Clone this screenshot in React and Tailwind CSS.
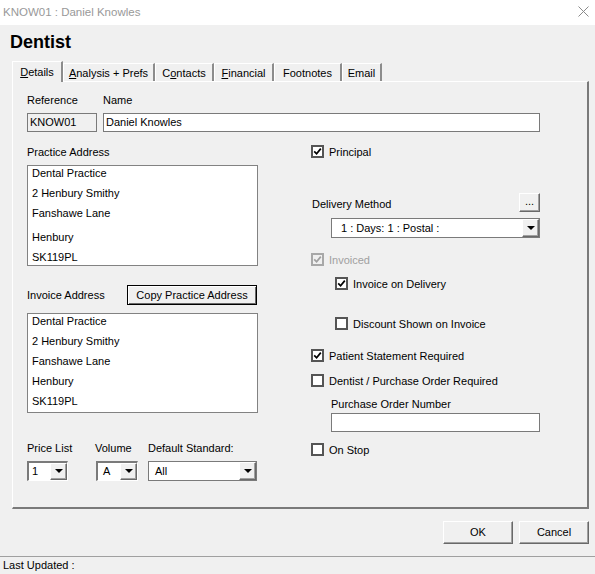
import React from "react";

const raised =
  "bg-[#f0f0f0] border-t border-l border-t-white border-l-white border-r border-b border-r-[#696969] border-b-[#696969] shadow-[inset_-1px_-1px_0_#a0a0a0]";

const Check = ({ checked, disabled, label, className = "" }) => (
  <div className={`flex items-center h-[16px] ${className}`}>
    <span
      className={`w-[13px] h-[13px] border-2 flex items-center justify-center ${
        disabled ? "border-[#a8a8a8] bg-[#f0f0f0]" : "border-[#555555] bg-white"
      }`}
    >
      {checked && (
        <svg width="9" height="9" viewBox="0 0 9 9">
          <path
            d="M1.2 4.3 L3.6 6.8 L7.8 1.6"
            fill="none"
            stroke={disabled ? "#a0a0a0" : "#000"}
            strokeWidth="1.7"
          />
        </svg>
      )}
    </span>
    <span className={`ml-[5px] ${disabled ? "text-[#a0a0a0]" : "text-black"}`}>{label}</span>
  </div>
);

const Arrow = () => (
  <span className={`w-[17px] h-full flex items-center justify-center ${raised}`}>
    <span className="w-0 h-0 border-l-[4px] border-r-[4px] border-t-[4px] border-l-transparent border-r-transparent border-t-black" />
  </span>
);

// sunken = small combos (dark top/left, light bottom/right)
const Combo = ({ value, width, sunken, textPad = "pl-[6px]" }) => (
  <div
    className={`flex h-[20px] bg-white ${
      sunken
        ? "border-t-2 border-l-2 border-t-[#7a7a7a] border-l-[#7a7a7a] border-b border-r border-b-white border-r-white"
        : "border border-[#7a7a7a]"
    }`}
    style={{ width }}
  >
    <span className={`flex-1 flex items-center ${textPad}`}>{value}</span>
    <Arrow />
  </div>
);

const AddressBox = ({ lines, height, extraGap }) => (
  <div className="w-[231px] bg-white border border-[#828282] overflow-hidden" style={{ height }}>
    <div className="-mt-[3px] pl-[4px]">
      {lines.map((l, i) => (
        <div key={i} className={`h-[20px] leading-[20px] ${extraGap && i === 3 ? "mt-[4px]" : ""}`}>
          {l}
        </div>
      ))}
    </div>
  </div>
);

const tabs = [
  { label: <><u>D</u>etails</>, w: 51, active: true },
  { label: <><u>A</u>nalysis + Prefs</>, w: 92 },
  { label: <>C<u>o</u>ntacts</>, w: 59 },
  { label: <><u>F</u>inancial</>, w: 60 },
  { label: <>Footnotes</>, w: 68 },
  { label: <>Email</>, w: 40 },
];

const address = ["Dental Practice", "2 Henbury Smithy", "Fanshawe Lane", "Henbury", "SK119PL"];

export default function App() {
  return (
    <div className="w-[595px] h-[574px] flex flex-col bg-[#f0f0f0] text-[11px] text-black font-['Liberation_Sans',Arial,sans-serif] overflow-hidden">
      {/* title bar */}
      <div className="h-[25px] bg-white flex items-center justify-between pl-[3px] pr-[6px]">
        <span className="text-[11.5px] text-[#999999]">KNOW01 : Daniel Knowles</span>
        <svg width="11" height="11" viewBox="0 0 11 11" className="-mt-[1px]">
          <path d="M0.5 0.5 L10.5 10.5 M10.5 0.5 L0.5 10.5" stroke="#8a8a8a" strokeWidth="1" />
        </svg>
      </div>

      <div className="mt-[7px] ml-[10px] text-[18px] leading-[20px] font-bold">Dentist</div>

      {/* tabs */}
      <div className="mt-[9px] ml-[12px] h-[20px] flex items-end">
        {tabs.map((t, i) => (
          <div
            key={i}
            style={{ width: t.w }}
            className={`flex items-center justify-center border-t border-t-white border-r-2 border-r-[#8c8c8c] border-l border-l-white ${
              t.active ? "h-[21px] -mb-[1px] relative z-10 bg-[#f0f0f0]" : "h-[18px] pt-[1px]"
            }`}
          >
            {t.label}
          </div>
        ))}
      </div>

      {/* panel */}
      <div className="w-[577px] h-[428px] ml-[12px] border-t border-l border-t-white border-l-white border-r-2 border-b-2 border-r-[#7a7a7a] border-b-[#7a7a7a] pt-[10px] pl-[14px]">
        <div className="flex h-[16px] items-center">
          <span className="w-[76px]">Reference</span>
          <span>Name</span>
        </div>
        <div className="mt-[5px] flex gap-[6px]">
          <div className="w-[70px] h-[19px] border border-[#7a7a7a] bg-[#f0f0f0] flex items-center pl-[2px]">
            KNOW01
          </div>
          <div className="w-[437px] h-[19px] border border-[#7a7a7a] bg-white flex items-center pl-[2px]">
            Daniel Knowles
          </div>
        </div>

        <div className="mt-[12px] flex">
          {/* left column */}
          <div className="w-[231px] flex flex-col">
            <div className="h-[16px] leading-[16px]">Practice Address</div>
            <div className="mt-[5px]">
              <AddressBox lines={address} height={101} extraGap />
            </div>
            <div className="mt-[19px] h-[20px] flex items-center">
              <span className="w-[100px]">Invoice Address</span>
              <button className="w-[130px] h-[20px] bg-[#f0f0f0] border border-black shadow-[inset_1px_1px_0_#fff,inset_-1px_-1px_0_#696969] flex items-center justify-center">
                Copy Practice Address
              </button>
            </div>
            <div className="mt-[8px]">
              <AddressBox lines={address} height={100} />
            </div>
            <div className="mt-[27px] h-[16px] flex items-center">
              <span className="w-[68px]">Price List</span>
              <span className="w-[53px]">Volume</span>
              <span>Default Standard:</span>
            </div>
            <div className="mt-[5px] flex">
              <div className="w-[69px]">
                <Combo value="1" width={41} sunken textPad="pl-[3px]" />
              </div>
              <div className="w-[52px]">
                <Combo value="A" width={42} sunken textPad="pl-[5px]" />
              </div>
              <Combo value="All" width={109} />
            </div>
          </div>

          {/* right column */}
          <div className="ml-[53px] w-[229px] flex flex-col">
            <Check checked label="Principal" />
            <div className="mt-[33px] h-[19px] flex items-center justify-between">
              <span className="ml-[1px] mt-[3px]">Delivery Method</span>
              <button className={`w-[21px] h-[19px] flex items-end justify-center pb-[4px] leading-none ${raised}`}>
                ...
              </button>
            </div>
            <div className="mt-[6px] ml-[20px]">
              <Combo value="1 : Days: 1 : Postal :" width={209} textPad="pl-[9px]" />
            </div>
            <Check checked disabled label="Invoiced" className="mt-[14px]" />
            <Check checked label="Invoice on Delivery" className="mt-[8px] ml-[24px]" />
            <Check label="Discount Shown on Invoice" className="mt-[24px] ml-[24px]" />
            <Check checked label="Patient Statement Required" className="mt-[16px]" />
            <Check label="Dentist / Purchase Order Required" className="mt-[9px]" />
            <div className="mt-[7px] ml-[20px] h-[16px] leading-[16px]">Purchase Order Number</div>
            <div className="mt-[1px] ml-[20px] w-[209px] h-[19px] border border-[#7a7a7a] bg-white" />
            <Check label="On Stop" className="mt-[10px]" />
          </div>
        </div>
      </div>

      {/* buttons */}
      <div className="mt-[12px] flex justify-end gap-[6px] pr-[6px]">
        <button className={`w-[70px] h-[23px] flex items-center justify-center ${raised}`}>OK</button>
        <button className={`w-[70px] h-[23px] flex items-center justify-center ${raised}`}>Cancel</button>
      </div>

      {/* status bar */}
      <div className="mt-[12px] border-t border-[#a0a0a0] flex-1 flex items-center pl-[3px] pb-[1px]">
        Last Updated :
      </div>
    </div>
  );
}
